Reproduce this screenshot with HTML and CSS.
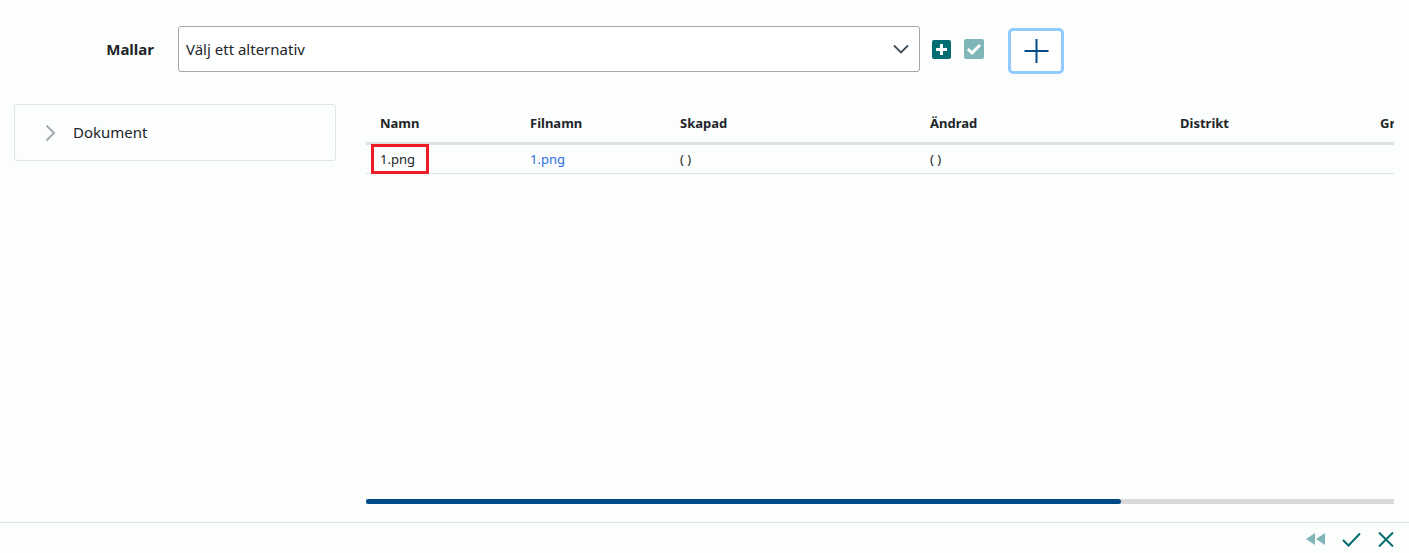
FILE: index.html
```html
<!DOCTYPE html>
<html lang="sv">
<head>
<meta charset="utf-8">
<title>Mallar</title>
<link rel="stylesheet" href="styles.css">
</head>
<body>
<div class="page">
  <header class="toolbar">
    <label class="toolbar-label">Mallar</label>
    <div class="select">
      <span>Välj ett alternativ</span>
      <svg class="select-arrow" width="16" height="10" viewBox="0 0 16 10"><path d="M1 1.500 8 8.500 15 1.500" fill="none" stroke="#3d4f5c" stroke-width="1.800"/></svg>
    </div>
    <svg class="tool-icon" width="19" height="19" viewBox="0 0 19 19"><rect width="19" height="19" rx="2" fill="#006d70"/><path d="M9.500 4v11M4 9.500h11" stroke="#fff" stroke-width="3"/></svg>
    <svg class="tool-icon tool-check" width="20" height="20" viewBox="0 0 20 20"><rect width="20" height="20" rx="2" fill="#80b6b8"/><path d="M4 10 8 14 16 6" fill="none" stroke="#fff" stroke-width="3"/></svg>
    <button class="add-button" type="button">
      <svg width="26" height="26" viewBox="0 0 26 26"><path d="M13.500 1v24M1.500 13h24" stroke="#004b87" stroke-width="2"/></svg>
    </button>
  </header>

  <main class="content">
    <aside class="panel">
      <svg width="11" height="18" viewBox="0 0 11 18"><path d="M1.500 1.500 9 9 1.500 16.500" fill="none" stroke="#a3abb1" stroke-width="2"/></svg>
      <span class="panel-title">Dokument</span>
    </aside>
    <section class="table-area">
      <div class="table-clip">
        <table class="grid">
          <thead>
            <tr><th class="w150">Namn</th><th class="w150">Filnamn</th><th class="w250">Skapad</th><th class="w250">Ändrad</th><th class="w200">Distrikt</th><th class="w200">Grupp</th></tr>
          </thead>
          <tbody>
            <tr><td><span class="marked">1.png</span></td><td><a class="file-link" href="#">1.png</a></td><td>( )</td><td>( )</td><td></td><td></td></tr>
          </tbody>
        </table>
      </div>
      <div class="scrollbar"><div class="scrollbar-thumb"></div></div>
    </section>
  </main>

  <footer class="footer">
    <svg width="19" height="12" viewBox="0 0 19 12"><path d="M9 0v12L0 6zM19 0v12L10 6z" fill="#80b6b8"/></svg>
    <svg width="19" height="15" viewBox="0 0 19 15"><path d="M1 8 6.500 13.500 18 1.500" fill="none" stroke="#006d70" stroke-width="2"/></svg>
    <svg width="16" height="15" viewBox="0 0 16 15"><path d="M1 .5 15 14.500M15 .5 1 14.500" fill="none" stroke="#006d70" stroke-width="2"/></svg>
  </footer>
</div>
</body>
</html>
```
FILE: styles.css
```css
* { box-sizing: border-box; }
html, body { margin: 0; height: 100%; }
body {
  background: #fcfdfd;
  color: #212529;
  font-family: "Noto Sans", "Open Sans", sans-serif;
  font-size: 14px;
  overflow: hidden;
}
.page { height: 553px; display: flex; flex-direction: column; }
.toolbar {
  display: flex;
  align-items: center;
  height: 74px;
  padding: 26px 0 0 0;
}
.toolbar-label {
  width: 154px;
  text-align: right;
  font-weight: 700;
  font-size: 15px;
  margin: -3px 24px 0 0;
}
.select {
  width: 742px;
  height: 46px;
  border: 1px solid #a6a6a6;
  border-radius: 3px;
  background: #fff;
  display: flex;
  align-items: center;
  justify-content: space-between;
  padding: 0 10px 0 7px;
  font-size: 15px;
  margin-top: -2px;
}
.tool-icon { margin: -2px 0 0 12px; flex: none; }
.tool-check { margin-left: 13px; }
.add-button {
  width: 56px;
  height: 46px;
  margin: 2px 0 0 24px;
  padding: 0;
  border: 3px solid #8fcbff;
  border-radius: 5px;
  background: #fff;
  display: flex;
  align-items: center;
  justify-content: center;
}
.content {
  flex: 1;
  display: flex;
  align-items: flex-start;
  padding: 30px 15px 0 14px;
}
.panel {
  width: 322px;
  height: 57px;
  border: 1px solid #dde5e7;
  border-radius: 3px;
  display: flex;
  align-items: center;
  gap: 17px;
  padding: 0 0 0 30px;
  font-size: 15px;
}
.panel-title { margin-top: -2px; }
.table-area {
  margin-left: 30px;
  width: 1028px;
  height: 400px;
  display: flex;
  flex-direction: column;
  justify-content: space-between;
}
.table-clip { overflow: hidden; }
.grid {
  table-layout: fixed;
  border-collapse: collapse;
  width: 1200px;
  font-size: 13px;
}
.w150 { width: 150px; }
.w250 { width: 250px; }
.w200 { width: 200px; }
.grid th {
  text-align: left;
  font-weight: 700;
  height: 39px;
  padding: 0 0 0 14px;
  border-bottom: 3px solid #dbe3e4;
  white-space: nowrap;
  overflow: hidden;
}
.grid td {
  height: 30px;
  padding: 0 0 0 14px;
  border-bottom: 1px solid #dbe3e4;
  white-space: nowrap;
}
.file-link { color: #2b6fe6; text-decoration: none; }
.marked {
  display: inline-block;
  outline: 3px solid #ee1c25;
  outline-offset: -3px;
  margin: -1px 0 -2px -9px;
  padding: 5px 14px 5px 9px;
  line-height: 20px;
}
.scrollbar {
  height: 5px;
  background: #d9d9d9;
}
.scrollbar-thumb {
  width: 755px;
  height: 5px;
  background: #004b87;
  border-radius: 3px;
}
.footer {
  height: 31px;
  border-top: 1px solid #dbe3e4;
  display: flex;
  align-items: center;
  justify-content: flex-end;
  gap: 17px;
  padding: 2px 15px 0 0;
}
```
